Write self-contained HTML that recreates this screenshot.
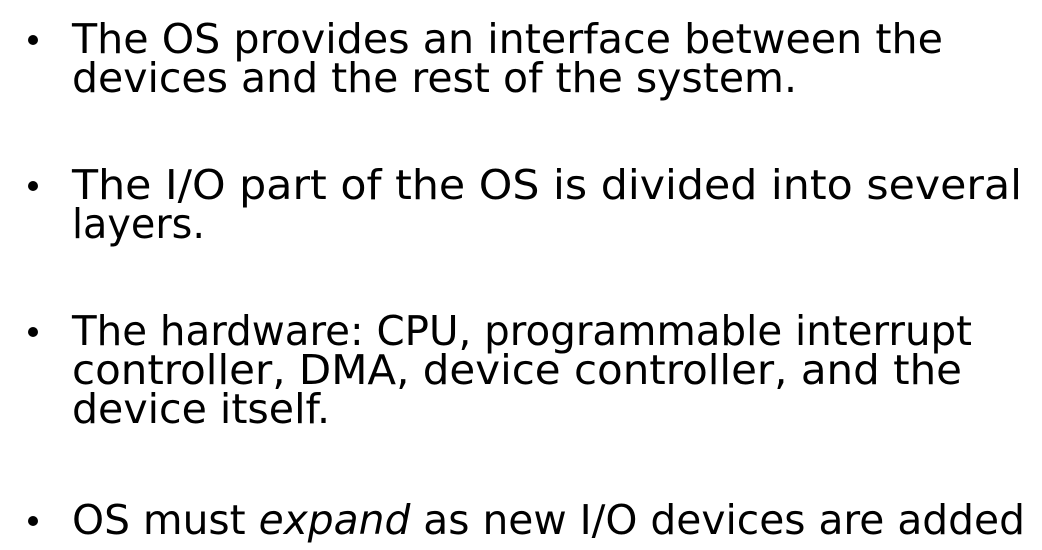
<!DOCTYPE html>
<html><head><style>html,body{margin:0;padding:0;background:#fff;width:1042px;height:550px;overflow:hidden}</style></head>
<body>
<svg width="1042" height="550" xmlns="http://www.w3.org/2000/svg" font-family="'DejaVu Sans','Liberation Sans',sans-serif" font-size="41" fill="#000">
<g>
<circle cx="33" cy="40" r="5"/>
<circle cx="33" cy="186" r="5"/>
<circle cx="33" cy="332" r="5"/>
<circle cx="33" cy="521" r="5"/>
</g>
<text x="72" y="53" textLength="871" lengthAdjust="spacingAndGlyphs">The OS provides an interface between the</text>
<text x="72" y="92" textLength="725" lengthAdjust="spacingAndGlyphs">devices and the rest of the system.</text>
<text x="72" y="199" textLength="950" lengthAdjust="spacingAndGlyphs">The I/O part of the OS is divided into several</text>
<text x="72" y="238" textLength="133" lengthAdjust="spacingAndGlyphs">layers.</text>
<text x="72" y="345" textLength="900" lengthAdjust="spacingAndGlyphs">The hardware: CPU, programmable interrupt</text>
<text x="72" y="384" textLength="890" lengthAdjust="spacingAndGlyphs">controller, DMA, device controller,  and the</text>
<text x="72" y="423" textLength="258" lengthAdjust="spacingAndGlyphs">device itself.</text>
<text x="72" y="534" textLength="953" lengthAdjust="spacingAndGlyphs">OS must <tspan font-style="italic">expand</tspan> as new I/O devices are added</text>
</svg>
</body></html>
